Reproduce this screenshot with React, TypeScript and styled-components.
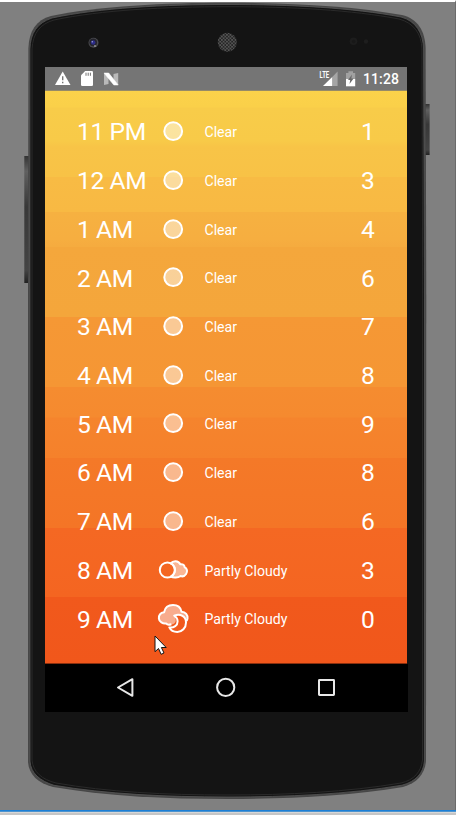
import React from 'react';
import styled, { createGlobalStyle } from 'styled-components';

const GlobalStyle = createGlobalStyle`
  * { box-sizing: border-box; }
  html, body { margin: 0; padding: 0; background: #808080; }
  svg { display: block; }
`;

const Page = styled.main`
  width: 456px;
  height: 815px;
  overflow: hidden;
  display: flex;
  flex-direction: column;
  font-family: Roboto, sans-serif;
  color: #fff;
`;

const Desk = styled.div`
  height: 810px;
  border-top: 2px solid #fff;
  border-right: 1px solid #6b6b6b;
  background: #808080;
  display: grid;
`;

const Frame = styled.svg`
  grid-area: 1 / 1;
  margin-top: -2px;
`;

const WindowEdge = styled.div`
  height: 5px;
  background: linear-gradient(#1c7fd6 0 1px, #4c93cf 1px 2px, #d8d8d8 2px 2.5px, #808080 2.5px 3px, #c6c6c6 3px);
`;

const Screen = styled.section`
  grid-area: 1 / 1;
  width: 363px;
  height: 645px;
  margin: 65px 0 0 45px;
  display: flex;
  flex-direction: column;
`;

const StatusBar = styled.header`
  width: 362px;
  height: 24px;
  flex: none;
  background: #757575;
  border-bottom: 1px solid #958a68;
  display: flex;
  justify-content: space-between;
`;

const Clock = styled.time`
  font-size: 14px;
  font-weight: 500;
  line-height: 25px;
  width: 44px;
  letter-spacing: 0.1px;
`;

const StatusRight = styled.div`
  display: flex;
`;

const Forecast = styled.ul`
  list-style: none;
  margin: 0;
  padding: 16.8px 0 0;
  width: 362px;
  height: 573px;
  flex: none;
  border-bottom: 1px solid #8a2f0e;
  background: linear-gradient(
    #fbd24a 0, #fad049 16px, #f8cc49 17px, #f8ca48 50px,
    #f8c447 56px, #f8c246 86px, #f8bb44 86px, #f8b943 121px,
    #f6b141 121px, #f6ae40 148px, #f5ab3f 156px, #f4a73c 156px,
    #f4a63b 226px, #f59835 226px, #f59634 296px, #f58c30 296px,
    #f58a2f 326px, #f5842d 327px, #f5812b 367px, #f47928 367px,
    #f47526 437px, #f46823 437px, #f46521 506px, #f1591c 506px, #f1571b 573px
  );
`;

const Hour = styled.li`
  height: 48.72px;
  padding-left: 32px;
  padding-right: 32.3px;
  display: grid;
  grid-template-columns: 79px 48.5px 1fr auto;
  align-items: center;
`;

const Time = styled.span`
  font-size: 24.6px;
  line-height: 32px;
  letter-spacing: -0.4px;
  white-space: nowrap;
  padding-top: 0.4px;
`;

const Summary = styled.span`
  font-size: 14.1px;
  line-height: 20px;
`;

const Temperature = styled.span`
  font-size: 24.6px;
  line-height: 32px;
  padding-top: 0.4px;
`;

const NavBar = styled.nav`
  height: 48px;
  width: 363px;
  background: #000;
`;

type Sky = 'clear' | 'dayCloud' | 'nightCloud';

function SkyIcon({ kind }: { kind: Sky }) {
  return (
    <svg width="34" height="34" viewBox="0 0 34 34" fill="none" stroke="#fff" strokeWidth="2" strokeLinejoin="round">
      {kind === 'clear' && <circle cx="17.2" cy="16.2" r="8.9" fill="#fff" fillOpacity=".48" />}
      {kind === 'dayCloud' && (
        <>
          <path
            d="M14.7 9.4 C17 6.5 22.3 6.4 24.3 10.2 C27 9.8 28.4 11.3 28.6 13.2 C31.4 14.2 31.6 17.7 30.1 20 C28.5 22.4 26 22.6 24.5 22 C22 23.8 17.5 24 14.7 22.6 C20.2 19.5 20.2 12.5 14.7 9.4Z"
            fill="#fff"
            fillOpacity=".52"
          />
          <circle cx="11.4" cy="16" r="7.6" />
        </>
      )}
      {kind === 'nightCloud' && (
        <>
          <path
            d="M14.6 22.4 C12.5 23 11 22.6 10.3 21.4 C6.8 22 3.2 19.8 2.9 16.6 C2.6 13 5 10.7 8.1 10.2 C9 5.6 12.7 3.1 17 3.1 C21.4 3.1 24.7 5.7 25.5 9.7 C29.6 9.9 32 13 31.5 16.5 L30.2 19 C28.5 12.8 22.5 11.4 17.8 13.3 C18.8 15 20 17 19.8 19 C19.5 21 17 23 14.6 22.4Z"
            fill="#fff"
            fillOpacity=".5"
            stroke="none"
          />
          <path d="M15.4 22.2 C12.8 23 11 22.6 10.3 21.4 C6.8 22 3.2 19.8 2.9 16.6 C2.6 13 5 10.7 8.1 10.2 C9 5.6 12.7 3.1 17 3.1 C21.4 3.1 24.7 5.7 25.5 9.7 C29.6 9.9 32 13 31.5 16.5 C31.3 17.6 30.8 18.4 30.2 19" />
          <path d="M18.2 13.6 C24.4 11.2 30 14.4 30 20.4 C30 26 26 30 21.3 30 C17.5 30 14.6 28.2 13.3 25.4 C18 26 21.6 23.4 21.6 19.5 C21.6 17 20.4 15 18.2 13.6Z" />
        </>
      )}
    </svg>
  );
}

function PhoneFrame() {
  return (
    <Frame width="455" height="810" viewBox="0 0 455 810" aria-hidden="true">
      <defs>
        <linearGradient id="key" x1="0" y1="0" x2="0" y2="1">
          <stop offset="0" stopColor="#333" />
          <stop offset=".12" stopColor="#606060" />
          <stop offset=".4" stopColor="#383838" />
          <stop offset=".9" stopColor="#444" />
          <stop offset="1" stopColor="#222" />
        </linearGradient>
        <pattern id="mesh" width="3.4" height="3.4" patternUnits="userSpaceOnUse">
          <rect width="3.4" height="3.4" fill="#555" />
          <circle cx=".9" cy=".9" r=".85" fill="#151515" />
          <circle cx="2.6" cy="2.6" r=".85" fill="#151515" />
        </pattern>
      </defs>
      <rect x="24.3" y="156" width="5" height="127" fill="url(#key)" />
      <rect x="425" y="104" width="4.6" height="51" fill="url(#key)" />
      <path
        d="M28.4 48 C29 31 36 20 51 16 C99 6 164 2.7 228 2.7 C292 2.7 354 6 402 15 C418 19 425 31 425.6 48 L426.3 300 L426 761 C425 774 417 783 403 787 C349 796 287 799 228 799 C165 799 105 796 53 787 C38 783 29 775 28 762 L28 300Z"
        fill="#474747"
      />
      <path
        d="M29.9 49 C30.5 33 37 23 52 18 C100 7.8 164 4.5 228 4.5 C292 4.5 353 7.8 401 17 C416 21 423 33 423.6 49 L424.5 300 L424.4 761 C423.5 773 416 781.5 402 785.2 C348 794.3 287 797 228 797 C165 797 106 794 54 785.3 C40 781 30.5 773 30 761Z"
        fill="#141414"
        stroke="#585858"
        strokeWidth=".8"
      />
      <path
        d="M32 49 C33 33 40 24 54 20 C101 10 165 6.7 228 6.7 C292 6.7 352 10 399 19 C414 23 421.5 34 422 49 L422.7 300 L422.5 760 C421 772 414 780 401 783 C348 792 287 795 228 795 C165 795 107 792 56 783 C42 779.5 33 772 32 760Z"
        fill="#141414"
        stroke="#2a2a2a"
        strokeWidth="1"
      />
      <circle cx="93.5" cy="42.7" r="5" fill="#4c4c50" />
      <circle cx="93.2" cy="42.4" r="3.8" fill="#24242c" />
      <circle cx="93.2" cy="42.5" r="2.3" fill="#2c2c88" />
      <circle cx="92.3" cy="41.8" r=".8" fill="#9da0d0" />
      <circle cx="95" cy="46" r="1" fill="#929292" />
      <circle cx="227.3" cy="42.3" r="9.5" fill="url(#mesh)" />
      <circle cx="353.5" cy="41.3" r="3.8" fill="#1d1d1d" />
      <circle cx="353.7" cy="41.5" r="1.8" fill="#181818" />
      <circle cx="366" cy="41.5" r="2.2" fill="#1e1e1e" />
    </Frame>
  );
}

function Notifications() {
  return (
    <svg width="90" height="23" viewBox="45 67 90 23" aria-hidden="true">
      <path d="M62.7 71.5 L70.5 85 H55Z" fill="#fff" />
      <path d="M62.7 76.2 V80.3 M62.7 81.8 V83.3" stroke="#757575" strokeWidth="1.4" />
      <path d="M85.2 71 H91.7 Q93 71 93 72.3 V84.7 Q93 86 91.7 86 H82.2 Q81 86 81 84.7 V75.2Z" fill="#fff" />
      <path d="M86 72.7 V75.8 M88.2 72.7 V75.8 M90.4 72.7 V75.8" stroke="#757575" />
      <path d="M104 73 L108.5 77 V84 L104 85Z M118.2 73 L113.5 74 V80 L118.2 85Z" fill="#b9b9b9" />
      <path d="M104 73 H108.7 L118.2 85 H113.8Z" fill="#fff" stroke="#fff" strokeWidth=".5" />
    </svg>
  );
}

function Signals() {
  return (
    <svg width="44" height="23" viewBox="319 67 44 23" aria-hidden="true">
      <path d="M337.6 71.5 V86 H332.2 V77Z" fill="#a5a5a5" />
      <path d="M332.2 77 V86 H323Z" fill="#fff" />
      <text
        x="319.6"
        y="78"
        fontFamily="Roboto, sans-serif"
        fontSize="9"
        fontWeight="700"
        textLength="9.5"
        lengthAdjust="spacingAndGlyphs"
        fill="#fff"
      >
        LTE
      </text>
      <path d="M348.4 71.3 H353 V73 H355.2 V79 H346 V73 H348.4Z" fill="#a1a1a1" />
      <path d="M346 79 H355.2 V86.3 H346Z" fill="#fff" />
      <path d="M352 74.4 L348 80 H350.2 L349.5 84 L353.6 78.4 H351.3Z" fill="#696969" />
    </svg>
  );
}

function NavIcons() {
  return (
    <svg width="363" height="48" viewBox="45 664 363 48" fill="none" stroke="#e8e8e8" strokeWidth="2">
      <path d="M132.4 679.2 V695.8 L118 687.5Z" strokeLinejoin="round" />
      <circle cx="225.7" cy="687.4" r="8.6" />
      <rect x="319" y="680" width="15" height="15" rx=".4" />
    </svg>
  );
}

const PointerSvg = styled.svg`
  position: absolute;
  left: 153.5px;
  top: 635px;
`;

function Cursor() {
  return (
    <PointerSvg width="14" height="21" viewBox="0 0 14 21" aria-hidden="true">
      <path d="M1 1 V16.7 L4.5 13.5 L7.1 19.3 L10 18 L7.4 12.5 H12.2Z" fill="#fff" stroke="#151515" />
    </PointerSvg>
  );
}

const hours: { time: string; sky: Sky; text: string; temp: number }[] = [
  { time: '11 PM', sky: 'clear', text: 'Clear', temp: 1 },
  { time: '12 AM', sky: 'clear', text: 'Clear', temp: 3 },
  { time: '1 AM', sky: 'clear', text: 'Clear', temp: 4 },
  { time: '2 AM', sky: 'clear', text: 'Clear', temp: 6 },
  { time: '3 AM', sky: 'clear', text: 'Clear', temp: 7 },
  { time: '4 AM', sky: 'clear', text: 'Clear', temp: 8 },
  { time: '5 AM', sky: 'clear', text: 'Clear', temp: 9 },
  { time: '6 AM', sky: 'clear', text: 'Clear', temp: 8 },
  { time: '7 AM', sky: 'clear', text: 'Clear', temp: 6 },
  { time: '8 AM', sky: 'dayCloud', text: 'Partly Cloudy', temp: 3 },
  { time: '9 AM', sky: 'nightCloud', text: 'Partly Cloudy', temp: 0 },
];

export default function App() {
  return (
    <>
      <GlobalStyle />
      <Page>
        <Desk>
          <PhoneFrame />
          <Screen>
            <StatusBar>
              <Notifications />
              <StatusRight>
                <Signals />
                <Clock>11:28</Clock>
              </StatusRight>
            </StatusBar>
            <Forecast>
              {hours.map((hour) => (
                <Hour key={hour.time}>
                  <Time>{hour.time}</Time>
                  <SkyIcon kind={hour.sky} />
                  <Summary>{hour.text}</Summary>
                  <Temperature>{hour.temp}</Temperature>
                </Hour>
              ))}
            </Forecast>
            <NavBar>
              <NavIcons />
            </NavBar>
          </Screen>
        </Desk>
        <WindowEdge />
        <Cursor />
      </Page>
    </>
  );
}
